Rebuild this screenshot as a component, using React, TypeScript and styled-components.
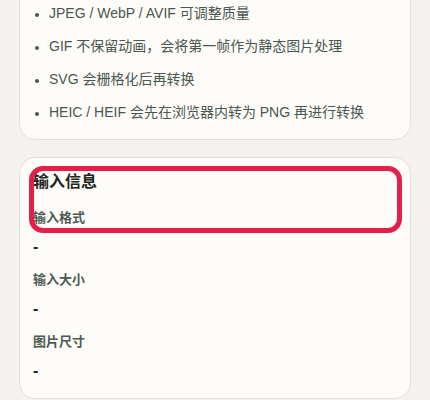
import React from 'react';
import styled, { createGlobalStyle } from 'styled-components';

const GlobalStyle = createGlobalStyle`
  html, body {
    margin: 0;
    padding: 0;
    background: #f3f2ee;
  }

  body {
    font-family: 'Liberation Sans', 'Noto Sans CJK SC', sans-serif;
    -webkit-font-smoothing: antialiased;
  }
`;

const Page = styled.div`
  display: flex;
  flex-direction: column;
  gap: 17px;
  padding: 0 19px;
  margin-top: -48px;
`;

const Card = styled.section`
  position: relative;
  background: #fdfcf8;
  border: 1px solid #e2dfd7;
  border-radius: 16px;
  padding: 13px 13px 16px;
`;

const CardTitle = styled.h3`
  margin: 0 0 14px;
  font-size: 16px;
  line-height: 22px;
  font-weight: 700;
  color: #1d2621;
`;

const InfoTitle = styled(CardTitle)`
  margin-bottom: 16px;
`;

const NoteList = styled.ul`
  margin: 0;
  padding-left: 16px;
  color: #4a5750;
  font-size: 14px;

  li {
    line-height: 22px;
    margin-bottom: 10.9px;
  }

  li:last-child {
    margin-bottom: 0;
  }

  li::marker {
    font-size: 12px;
  }
`;

const InfoList = styled.dl`
  margin: 0;
`;

const Label = styled.dt`
  margin: 0 0 9px;
  font-size: 13px;
  line-height: 18px;
  font-weight: 700;
  color: #4f5a53;
`;

const Value = styled.dd`
  margin: 0 0 13px;
  font-size: 16px;
  line-height: 22px;
  font-weight: 700;
  color: #1d2621;

  &:last-child {
    margin-bottom: 0;
  }
`;

const Highlight = styled.div`
  position: absolute;
  left: 9px;
  top: 8px;
  width: 373px;
  height: 67px;
  box-sizing: border-box;
  border: 5px solid #e3204a;
  border-radius: 14px;
  pointer-events: none;
`;

const notes = [
  'JPEG / WebP / AVIF 可调整质量',
  'GIF 不保留动画，会将第一帧作为静态图片处理',
  'SVG 会栅格化后再转换',
  'HEIC / HEIF 会先在浏览器内转为 PNG 再进行转换',
];

const info = [
  { label: '输入格式', value: '-' },
  { label: '输入大小', value: '-' },
  { label: '图片尺寸', value: '-' },
];

const App = (): JSX.Element => (
  <>
    <GlobalStyle />
    <Page>
      <Card>
        <CardTitle>转换说明</CardTitle>
        <NoteList>
          {notes.map((n) => (
            <li key={n}>{n}</li>
          ))}
        </NoteList>
      </Card>
      <Card>
        <InfoTitle>输入信息</InfoTitle>
        <InfoList>
          {info.map((row) => (
            <React.Fragment key={row.label}>
              <Label>{row.label}</Label>
              <Value>{row.value}</Value>
            </React.Fragment>
          ))}
        </InfoList>
        <Highlight />
      </Card>
    </Page>
  </>
);

export default App;
